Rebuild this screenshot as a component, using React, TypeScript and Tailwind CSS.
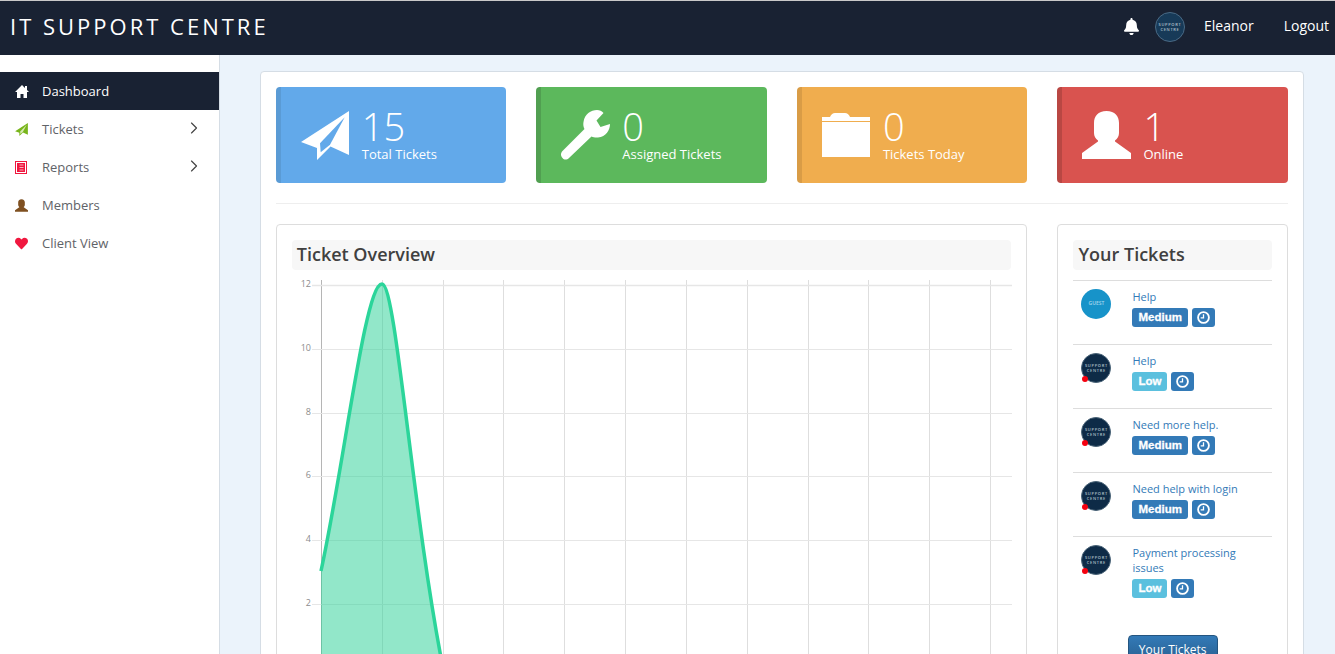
import { ChevronRight } from 'lucide-react';
import { FaBell, FaHeart } from 'react-icons/fa';

const font = "font-['Open_Sans',sans-serif]";

function HomeIcon() {
  return (
    <svg viewBox="0 0 14 13" className="h-[13px] w-[14px]" fill="#fff">
      <path d="M7 0 10 3V1h2v4l2 2h-2v6H8.500V9h-3v4H2V7H0z" />
    </svg>
  );
}

function PlaneIcon({ className, cut }: { className: string; cut?: string }) {
  return (
    <svg viewBox="0 0 48 49" className={className} fill="currentColor">
      <path d="M48 0 0 31l16 6v12l13.500-13.500L48 44z" />
      <path d="M43.700 6.300 19 32.300l.7 9 9.300-7.600z" fill={cut ?? 'none'} />
    </svg>
  );
}

function WrenchIcon() {
  return (
    <svg viewBox="0 0 50 50" className="h-[50px] w-[50px]" fill="currentColor">
      <path d="M42.500 3 35.500 10.500 39.500 17 49 14C49 20 45 27 37 27.500 34.500 27.700 32.500 27.500 30.500 26.500L8 48C6 50 3 50 1.500 48-.5 46-.5 43 1.500 41L23.500 19C22.500 17 22 15 22.500 12 23.500 4 30 0 36 0 38.500 0 41 1 42.500 3z" />
    </svg>
  );
}

function UserIcon({ className }: { className: string }) {
  return (
    <svg viewBox="0 0 49 48" className={className} fill="currentColor">
      <path d="M24.500 0C16 0 12 5 12 12V22C12 25 13.500 27.500 16 29.500V30.500L0 42V48H49V42L33 30.500V29.500C35.500 27.500 37 25 37 22V12C37 5 33 0 24.500 0z" />
    </svg>
  );
}

function FolderIcon({ className }: { className: string }) {
  return (
    <svg viewBox="0 0 48 44" className={className} fill="currentColor">
      <path d="M8 4C9 1.500 11 0 13 0H23C25 0 27 1.500 28 4z" />
      <rect x="0" y="4" width="48" height="4" />
      <rect x="0" y="9" width="48" height="35" />
    </svg>
  );
}

function ReportIcon() {
  return (
    <svg viewBox="0 0 12 13" className="h-[13px] w-3" fill="none">
      <rect x="0.500" y="0.500" width="11" height="12" stroke="#f0173f" />
      <rect x="2" y="2" width="8" height="9" fill="#f0173f" />
      <path d="M4.500 4h4M4.500 6.500h4M4.500 9h4" stroke="#ffd5dd" strokeWidth="0.800" />
    </svg>
  );
}

function ClockIcon() {
  return (
    <svg viewBox="0 0 12 12" className="h-[13px] w-[13px]" fill="none" stroke="#fff">
      <circle cx="6" cy="6" r="5" strokeWidth="1.700" />
      <path d="M6 3V6.300H3.400" strokeWidth="1.200" />
    </svg>
  );
}

function Avatar({ guest }: { guest?: boolean }) {
  if (guest) {
    return (
      <div className="flex h-[30px] w-[30px] shrink-0 items-center justify-center rounded-full bg-[#1793c9] text-[5px] font-semibold text-[#a8d8ee]">
        GUEST
      </div>
    );
  }
  return (
    <div className="relative h-[30px] w-[30px] shrink-0">
      <div className="flex h-full w-full flex-col items-center justify-center rounded-full border border-[#4a6478] bg-[#0e2b47] text-[4px] font-semibold leading-[5px] tracking-[0.7px] text-[#b4c1cc]">
        <span>SUPPORT</span>
        <span>CENTRE</span>
      </div>
      <span className="absolute bottom-px left-px h-[6px] w-[6px] rounded-full bg-[#f5000f]" />
    </div>
  );
}

const navItems = [
  { label: 'Dashboard', icon: <HomeIcon />, active: true },
  { label: 'Tickets', icon: <PlaneIcon className="h-[13px] w-[13px] text-[#79b51c]" cut="#d5ebb0" />, arrow: true },
  { label: 'Reports', icon: <ReportIcon />, arrow: true },
  { label: 'Members', icon: <UserIcon className="h-[13px] w-[13px] text-[#7f5021]" /> },
  { label: 'Client View', icon: <FaHeart className="h-[13px] w-[13px] text-[#f0183f]" /> },
];

const stats = [
  { value: '15', label: 'Total Tickets', bg: 'bg-[#62a9ea] border-[#5a9bd5]', icon: <PlaneIcon className="h-[49px] w-12" cut="#62a9ea" /> },
  { value: '0', label: 'Assigned Tickets', bg: 'bg-[#5cb85c] border-[#519f51]', icon: <WrenchIcon /> },
  { value: '0', label: 'Tickets Today', bg: 'bg-[#f0ad4e] border-[#d99c46]', icon: <FolderIcon className="h-11 w-12" /> },
  { value: '1', label: 'Online', bg: 'bg-[#d9534f] border-[#b94743]', icon: <UserIcon className="h-12 w-[49px]" /> },
];

const tickets = [
  { title: 'Help', level: 'Medium', guest: true },
  { title: 'Help', level: 'Low' },
  { title: 'Need more help.', level: 'Medium' },
  { title: 'Need help with login', level: 'Medium' },
  { title: 'Payment processing issues', level: 'Low' },
];

function Chart() {
  const xs = [321, 382, 443, 503, 564, 625, 686, 747, 808, 868, 929, 990];
  const ys = [
    { y: 285, label: '12' },
    { y: 349, label: '10' },
    { y: 413, label: '8' },
    { y: 476, label: '6' },
    { y: 540, label: '4' },
    { y: 604, label: '2' },
  ];
  return (
    <svg viewBox="292 275 720 400" className="mt-[5px] h-[400px] w-[720px]">
      {xs.map((x, i) => (
        <line key={x} x1={x + 0.5} x2={x + 0.5} y1="280" y2="675" stroke={i === 0 ? '#b5b5b5' : '#dedede'} strokeWidth="1" />
      ))}
      {ys.map(t => (
        <g key={t.y}>
          <line x1="312" x2="1012" y1={t.y + 0.5} y2={t.y + 0.5} stroke="#e6e6e6" strokeWidth={t.y === 285 ? 1.500 : 1} />
          <text x="311" y={t.y + 1.500} textAnchor="end" fontSize="9" fill="#8c8c8c" fontFamily="'Open Sans',sans-serif">
            {t.label}
          </text>
        </g>
      ))}
      <path d="M321 571C345 460 365 284 382 284C396 284 412 510 443 668L321 668Z" fill="#26cf93" fillOpacity="0.5" />
      <path d="M321 571C345 460 365 284 382 284C396 284 412 510 443 668" fill="none" stroke="#2bd59a" strokeWidth="3.500" />
    </svg>
  );
}

export default function App() {
  return (
    <div className={`${font} flex h-[654px] flex-col overflow-hidden bg-[#ebf3fb]`}>
      <header className="flex h-[55px] shrink-0 items-center justify-between border-t border-[#c9c9c9] bg-[#192233] pb-1 pl-[10px] pr-[6px] text-white">
        <div className="text-[22px] tracking-[3px]">IT SUPPORT CENTRE</div>
        <div className="flex items-center text-sm">
          <FaBell className="mr-[15px] h-[17px] w-[17px]" />
          <div className="mr-[19px] mt-[2px] flex h-[30px] w-[30px] flex-col items-center justify-center rounded-full border border-[#4a6a85] bg-[#173a58] text-[4px] font-semibold leading-[5px] tracking-[0.7px] text-[#b4c1cc]">
            <span>SUPPORT</span>
            <span>CENTRE</span>
          </div>
          <span className="mr-[30px]">Eleanor</span>
          <span>Logout</span>
        </div>
      </header>
      <div className="flex min-h-0 flex-1">
        <aside className="w-[220px] shrink-0 border-r border-[#d5dde5] bg-white pt-[17px]">
          {navItems.map(item => (
            <div
              key={item.label}
              className={`flex h-[38px] items-center pl-[15px] pr-[15px] pt-[2px] text-[13px] ${item.active ? 'bg-[#192233] text-white' : 'text-[#5f6368]'}`}
            >
              <span className="-mt-[2px] flex w-[27px] shrink-0 items-center">{item.icon}</span>
              <span className="flex-1">{item.label}</span>
              {item.arrow && <ChevronRight strokeWidth={1.4} className="-mt-[5px] h-5 w-5 text-[#444]" />}
            </div>
          ))}
        </aside>
        <main className="min-w-0 flex-1 pl-[39.75px] pr-[31px] pt-4">
          <div className="rounded border border-[#d5dde5] bg-white p-[15px]">
            <div className="grid grid-cols-4 gap-x-[30px]">
              {stats.map(s => (
                <div key={s.label} className={`flex h-24 items-center rounded border-l-[5px] pl-5 text-white ${s.bg}`}>
                  <div className="flex h-[50px] w-[61px] shrink-0 items-center">{s.icon}</div>
                  <div className="mt-px">
                    <div className="text-[38px] font-light leading-[37px]">{s.value}</div>
                    <div className="text-[13px] leading-[18px]">{s.label}</div>
                  </div>
                </div>
              ))}
            </div>
            <hr className="mb-5 mt-5 border-[#eeeeee]" />
            <div className="grid grid-cols-4 gap-x-[30px]">
              <section className="col-span-3 rounded border border-[#dddddd] p-[15px]">
                <h2 className="h-[30px] rounded bg-[#f7f7f7] pl-[5px] text-lg font-semibold leading-[28px] text-[#404040]">Ticket Overview</h2>
                <Chart />
              </section>
              <section className="rounded border border-[#dddddd] p-[15px]">
                <h2 className="mb-[10px] h-[30px] rounded bg-[#f7f7f7] pl-[5px] text-lg font-semibold leading-[28px] text-[#404040]">Your Tickets</h2>
                {tickets.map(t => (
                  <div key={t.title + t.level} className="flex gap-[21px] border-t border-[#dddddd] pb-[17px] pl-2 pt-2">
                    <Avatar guest={t.guest} />
                    <div className="min-w-0">
                      <div className="pr-[6px] text-[11px] leading-[15px] text-[#337ab7]">{t.title}</div>
                      <div className="flex gap-1 pt-[4px]">
                        <span className={`flex h-[19px] items-center rounded-[3px] px-[6px] font-['Liberation_Sans',sans-serif] text-[11.500px] font-bold text-white [-webkit-text-stroke:0.3px_#fff] ${t.level === 'Low' ? 'bg-[#5bc0de]' : 'bg-[#337ab7]'}`}>
                          {t.level}
                        </span>
                        <span className="flex h-[19px] w-[23px] items-center justify-center rounded-[3px] bg-[#337ab7]">
                          <ClockIcon />
                        </span>
                      </div>
                    </div>
                  </div>
                ))}
                <div className="flex justify-center pt-[20px]">
                  <button className="h-[34px] w-[90px] rounded border border-[#245580] bg-gradient-to-b from-[#337ab7] to-[#265a88] pb-[4px] text-xs leading-[26px] text-white">
                    Your Tickets
                  </button>
                </div>
              </section>
            </div>
          </div>
        </main>
      </div>
    </div>
  );
}
